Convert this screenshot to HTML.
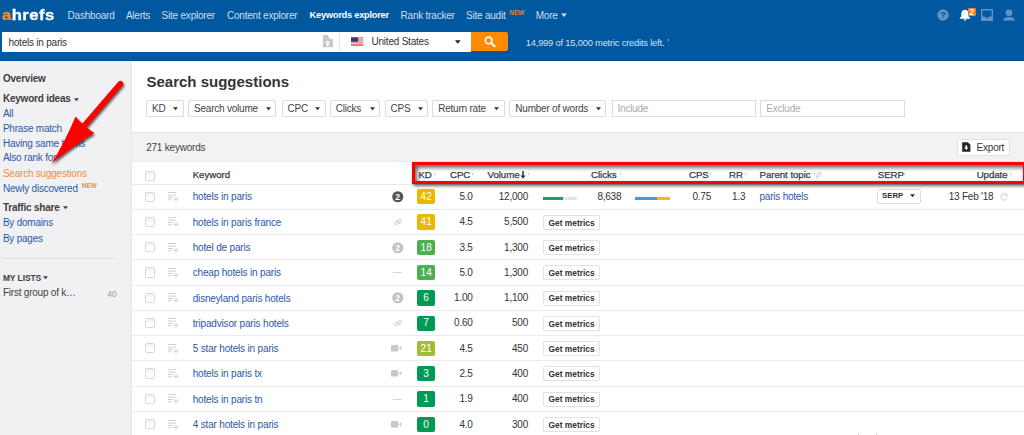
<!DOCTYPE html>
<html><head><meta charset="utf-8"><title>Keywords explorer</title>
<style>
html,body{margin:0;padding:0;width:1024px;height:435px;overflow:hidden;background:#fff;}
body{position:relative;font-family:"Liberation Sans",sans-serif;}
.b{position:absolute;}
.t{position:absolute;white-space:nowrap;}
svg.b{overflow:visible;}
</style></head><body>
<div class="b" style="left:0px;top:0px;width:1024px;height:61px;background:#00589f;"></div>
<div class="b" style="left:0px;top:60px;width:1024px;height:1px;background:#004e90;"></div>
<div class="t" style="left:2px;top:4.8px;font-size:14.8px;line-height:20px;font-weight:700;letter-spacing:0.35px;color:#fff;transform:scaleX(1.13);transform-origin:0 0;-webkit-text-stroke:0.35px #fff;"><span style="color:#f68b1f;-webkit-text-stroke:0.35px #f68b1f">a</span>hrefs</div>
<div class="t" style="left:67.6px;top:9.69px;font-size:10px;line-height:12.5px;color:#cfdff1;letter-spacing:-0.22px;">Dashboard</div>
<div class="t" style="left:125.9px;top:9.69px;font-size:10px;line-height:12.5px;color:#cfdff1;letter-spacing:-0.22px;">Alerts</div>
<div class="t" style="left:161.6px;top:9.69px;font-size:10px;line-height:12.5px;color:#cfdff1;letter-spacing:-0.22px;">Site explorer</div>
<div class="t" style="left:227px;top:9.69px;font-size:10px;line-height:12.5px;color:#cfdff1;letter-spacing:-0.22px;">Content explorer</div>
<div class="t" style="left:309.6px;top:10.37px;font-size:9.3px;line-height:11.62px;color:#fff;font-weight:700;letter-spacing:-0.26px;">Keywords explorer</div>
<div class="t" style="left:400.6px;top:9.69px;font-size:10px;line-height:12.5px;color:#cfdff1;letter-spacing:-0.22px;">Rank tracker</div>
<div class="t" style="left:466px;top:9.69px;font-size:10px;line-height:12.5px;color:#cfdff1;letter-spacing:-0.22px;">Site audit</div>
<div class="t" style="left:509.6px;top:9.18px;font-size:6.3px;line-height:7.88px;color:#f68b1f;-webkit-text-stroke:0.15px #f68b1f;">NEW</div>
<div class="t" style="left:535.7px;top:9.69px;font-size:10px;line-height:12.5px;color:#cfdff1;letter-spacing:-0.22px;">More</div>
<svg class="b" style="left:560px;top:12px" width="8" height="6"><path d="M1 1.5h6l-3 3.5z" fill="#cfdff1"/></svg>
<div class="b" style="left:2px;top:31.7px;width:337.3px;height:20px;background:#fff;"></div>
<div class="t" style="left:8.4px;top:36.69px;font-size:10px;line-height:12.5px;color:#333;letter-spacing:-0.22px;">hotels in paris</div>
<svg class="b" style="left:322.8px;top:35px" width="10" height="12.3" viewBox="0 0 10 12.3"><path d="M0 0h5.2v2.6h1.1v-1.2l0.5 0.6v2h3.2v8.3h-10z" fill="#c9c9c9"/><path d="M4.7 5.6l2.6 2.7h-1.6v3h-2v-3h-1.6z" fill="#fff"/></svg>
<div class="b" style="left:339px;top:31.7px;width:1px;height:20px;background:#e6e6e6;"></div>
<div class="b" style="left:340px;top:31.7px;width:131.4px;height:20px;background:#fff;"></div>
<svg class="b" style="left:351px;top:36.7px" width="12.3" height="9.2" viewBox="0 0 19 13"><rect width="19" height="13" fill="#fff"/><g fill="#d9534f"><rect y="0" width="19" height="1.6"/><rect y="3.2" width="19" height="1.6"/><rect y="6.4" width="19" height="1.6"/><rect y="9.6" width="19" height="1.6"/><rect y="11.6" width="19" height="1.4"/></g><rect width="11" height="6.8" fill="#2e3f80"/></svg>
<div class="t" style="left:371.5px;top:35.58px;font-size:10px;line-height:12.5px;color:#333;letter-spacing:-0.22px;">United States</div>
<svg class="b" style="left:455px;top:40px" width="6" height="4"><path d="M0 0.3h5.6l-2.8 3.4z" fill="#222"/></svg>
<div class="b" style="left:471.4px;top:31.6px;width:36.5px;height:19.8px;background:#ff8c00;border-radius:0 2px 2px 0;"></div>
<svg class="b" style="left:483.5px;top:36px" width="12" height="11" viewBox="0 0 12 11"><circle cx="4.6" cy="4.4" r="3.3" fill="none" stroke="#fff" stroke-width="1.6"/><path d="M7 6.8l3.6 3.4" stroke="#fff" stroke-width="2" stroke-linecap="round"/></svg>
<div class="t" style="left:525.75px;top:38.02px;font-size:9.3px;line-height:11.62px;color:#d3e2f2;letter-spacing:-0.18px;">14,999 of 15,000 metric credits left.</div>
<div class="b" style="left:667.5px;top:38.5px;width:0.8px;height:2px;background:#9fbddc;"></div>
<svg class="b" style="left:936.8px;top:9px" width="12" height="12" viewBox="0 0 12 12"><circle cx="6" cy="6" r="5.7" fill="#5f93c7"/><text x="6" y="9.4" text-anchor="middle" font-family="Liberation Sans" font-weight="700" font-size="9.6" fill="#0a569c">?</text></svg>
<svg class="b" style="left:958.6px;top:8.8px" width="12" height="12" viewBox="0 0 12 12"><path d="M6 0.8c-2.4 0-3.7 1.8-3.7 4v2.7l-1.6 1.6v0.6h10.6v-0.6l-1.6-1.6v-2.7c0-2.2-1.3-4-3.7-4z" fill="#fff"/><path d="M4.6 10.3h2.8c0 0.8-0.6 1.3-1.4 1.3s-1.4-0.5-1.4-1.3z" fill="#fff"/></svg>
<div class="b" style="left:968px;top:7.7px;width:7.7px;height:8.4px;background:#f47b20;border-radius:1px;"></div>
<div class="t" style="left:969.4px;top:6.94px;font-size:8.4px;line-height:10.5px;color:#fff;font-weight:700;">2</div>
<svg class="b" style="left:981px;top:9px" width="12" height="12" viewBox="0 0 12 12"><path d="M0 0h12v12h-12z M1.4 1.4v6.2h2.8l1 1.4h1.6l1-1.4h2.8v-6.2z" fill="#5f93c7" fill-rule="evenodd"/></svg>
<svg class="b" style="left:1003px;top:8.5px" width="12" height="12" viewBox="0 0 12 12"><circle cx="6" cy="3.8" r="3.3" fill="#5f93c7"/><path d="M0 11.5c0-2.3 2.5-3.6 6-3.6s6 1.3 6 3.6z" fill="#5f93c7"/></svg>
<div class="b" style="left:0px;top:61px;width:131px;height:374px;background:#f1f1f4;"></div>
<div class="b" style="left:131px;top:61px;width:1px;height:374px;background:#e3e3e8;"></div>
<div class="t" style="left:2.9px;top:73.48px;font-size:10px;line-height:12.5px;color:#3f3f3f;font-weight:700;letter-spacing:-0.22px;">Overview</div>
<div class="t" style="left:2.9px;top:92.78px;font-size:10px;line-height:12.5px;color:#3f3f3f;font-weight:700;letter-spacing:-0.22px;">Keyword ideas</div>
<svg class="b" style="left:73.5px;top:97.5px" width="6" height="4"><path d="M0 0.3h5l-2.5 3z" fill="#3f3f3f"/></svg>
<div class="t" style="left:2.9px;top:107.88px;font-size:10px;line-height:12.5px;color:#2b59a8;letter-spacing:-0.22px;">All</div>
<div class="t" style="left:2.9px;top:122.58px;font-size:10px;line-height:12.5px;color:#2b59a8;letter-spacing:-0.22px;">Phrase match</div>
<div class="t" style="left:2.9px;top:137.89px;font-size:10px;line-height:12.5px;color:#2b59a8;letter-spacing:-0.22px;">Having same terms</div>
<div class="t" style="left:2.9px;top:152.28px;font-size:10px;line-height:12.5px;color:#2b59a8;letter-spacing:-0.22px;">Also rank for</div>
<div class="t" style="left:2.9px;top:167.59px;font-size:10px;line-height:12.5px;color:#f68c3a;letter-spacing:-0.22px;">Search suggestions</div>
<div class="t" style="left:2.9px;top:182.78px;font-size:10px;line-height:12.5px;color:#2b59a8;letter-spacing:-0.22px;">Newly discovered</div>
<div class="t" style="left:81.8px;top:182.38px;font-size:6.4px;line-height:8.0px;color:#f98b3a;font-weight:700;">NEW</div>
<div class="t" style="left:2.9px;top:202.49px;font-size:10px;line-height:12.5px;color:#3f3f3f;font-weight:700;letter-spacing:-0.22px;">Traffic share</div>
<svg class="b" style="left:62.8px;top:206.3px" width="6" height="4"><path d="M0 0.3h5l-2.5 3z" fill="#3f3f3f"/></svg>
<div class="t" style="left:2.9px;top:217.49px;font-size:10px;line-height:12.5px;color:#2b59a8;letter-spacing:-0.22px;">By domains</div>
<div class="t" style="left:2.9px;top:232.59px;font-size:10px;line-height:12.5px;color:#2b59a8;letter-spacing:-0.22px;">By pages</div>
<div class="b" style="left:2.4px;top:258px;width:115px;height:1px;background:#dedee3;"></div>
<div class="t" style="left:2.9px;top:273.14px;font-size:8.5px;line-height:10.62px;color:#3f3f3f;font-weight:700;letter-spacing:-0.1px;">MY LISTS</div>
<svg class="b" style="left:43.4px;top:275.5px" width="6" height="4"><path d="M0 0.3h5l-2.5 3z" fill="#3f3f3f"/></svg>
<div class="t" style="left:2.9px;top:286.89px;font-size:10px;line-height:12.5px;color:#3f3f3f;letter-spacing:-0.22px;">First group of k&hellip;</div>
<div class="t" style="right:907.5px;top:289.03px;font-size:8.3px;line-height:10.38px;color:#999;">40</div>
<div class="b" style="left:132px;top:61px;width:892px;height:71px;background:#fff;"></div>
<div class="t" style="left:146.5px;top:73.23px;font-size:15px;line-height:18.75px;color:#333;font-weight:700;">Search suggestions</div>
<div class="b" style="left:291.5px;top:80.5px;width:1px;height:1.5px;background:#ccc;"></div>
<div class="b" style="left:146px;top:100.4px;width:37.69999999999999px;height:16.2px;background:#fff;border:1px solid #dcdcdc;border-radius:2px;box-sizing:border-box;"></div>
<div class="t" style="left:152px;top:102.88px;font-size:10px;line-height:12.5px;color:#444;letter-spacing:-0.22px;">KD</div>
<svg class="b" style="left:173.2px;top:107px" width="6" height="4"><path d="M0 0.3h5l-2.5 3z" fill="#333"/></svg>
<div class="b" style="left:188px;top:100.4px;width:88.39999999999998px;height:16.2px;background:#fff;border:1px solid #dcdcdc;border-radius:2px;box-sizing:border-box;"></div>
<div class="t" style="left:194px;top:102.88px;font-size:10px;line-height:12.5px;color:#444;letter-spacing:-0.22px;">Search volume</div>
<svg class="b" style="left:265.9px;top:107px" width="6" height="4"><path d="M0 0.3h5l-2.5 3z" fill="#333"/></svg>
<div class="b" style="left:281.5px;top:100.4px;width:44.0px;height:16.2px;background:#fff;border:1px solid #dcdcdc;border-radius:2px;box-sizing:border-box;"></div>
<div class="t" style="left:287.5px;top:102.88px;font-size:10px;line-height:12.5px;color:#444;letter-spacing:-0.22px;">CPC</div>
<svg class="b" style="left:315.0px;top:107px" width="6" height="4"><path d="M0 0.3h5l-2.5 3z" fill="#333"/></svg>
<div class="b" style="left:329.7px;top:100.4px;width:50.30000000000001px;height:16.2px;background:#fff;border:1px solid #dcdcdc;border-radius:2px;box-sizing:border-box;"></div>
<div class="t" style="left:335.7px;top:102.88px;font-size:10px;line-height:12.5px;color:#444;letter-spacing:-0.22px;">Clicks</div>
<svg class="b" style="left:369.5px;top:107px" width="6" height="4"><path d="M0 0.3h5l-2.5 3z" fill="#333"/></svg>
<div class="b" style="left:384.5px;top:100.4px;width:43.89999999999998px;height:16.2px;background:#fff;border:1px solid #dcdcdc;border-radius:2px;box-sizing:border-box;"></div>
<div class="t" style="left:390.5px;top:102.88px;font-size:10px;line-height:12.5px;color:#444;letter-spacing:-0.22px;">CPS</div>
<svg class="b" style="left:417.9px;top:107px" width="6" height="4"><path d="M0 0.3h5l-2.5 3z" fill="#333"/></svg>
<div class="b" style="left:432.2px;top:100.4px;width:72.40000000000003px;height:16.2px;background:#fff;border:1px solid #dcdcdc;border-radius:2px;box-sizing:border-box;"></div>
<div class="t" style="left:438.2px;top:102.88px;font-size:10px;line-height:12.5px;color:#444;letter-spacing:-0.22px;">Return rate</div>
<svg class="b" style="left:494.1px;top:107px" width="6" height="4"><path d="M0 0.3h5l-2.5 3z" fill="#333"/></svg>
<div class="b" style="left:509.3px;top:100.4px;width:97.19999999999999px;height:16.2px;background:#fff;border:1px solid #dcdcdc;border-radius:2px;box-sizing:border-box;"></div>
<div class="t" style="left:515.3px;top:102.88px;font-size:10px;line-height:12.5px;color:#444;letter-spacing:-0.22px;">Number of words</div>
<svg class="b" style="left:596.0px;top:107px" width="6" height="4"><path d="M0 0.3h5l-2.5 3z" fill="#333"/></svg>
<div class="b" style="left:611.5px;top:100.3px;width:144.5px;height:16.6px;background:#fff;border:1px solid #dcdcdc;box-sizing:border-box;"></div>
<div class="t" style="left:617.5px;top:102.88px;font-size:10px;line-height:12.5px;color:#aaa;letter-spacing:-0.22px;">Include</div>
<div class="b" style="left:760.2px;top:100.3px;width:144.8px;height:16.6px;background:#fff;border:1px solid #dcdcdc;box-sizing:border-box;"></div>
<div class="t" style="left:766.3px;top:102.88px;font-size:10px;line-height:12.5px;color:#aaa;letter-spacing:-0.22px;">Exclude</div>
<div class="b" style="left:132px;top:132px;width:892px;height:30px;background:#f2f2f5;border-top:1px solid #e6e6ea;border-bottom:1px solid #ebebee;box-sizing:border-box;"></div>
<div class="t" style="left:146.2px;top:141.89px;font-size:10px;line-height:12.5px;color:#444;letter-spacing:-0.22px;">271 keywords</div>
<div class="b" style="left:957px;top:138.8px;width:53.2px;height:17px;background:#fff;border:1px solid #e0e0e0;border-radius:2px;box-sizing:border-box;"></div>
<svg class="b" style="left:961.8px;top:142.2px" width="8.6" height="10" viewBox="0 0 8.6 10"><path d="M0.2 0.2h5.6l2.6 2.6v7h-8.2z" fill="#222"/><path d="M3.5 3.2h1.6v2.4h1.4l-2.2 2.4-2.2-2.4h1.4z" fill="#fff"/></svg>
<div class="t" style="left:976.6px;top:141.59px;font-size:10px;line-height:12.5px;color:#333;letter-spacing:-0.22px;">Export</div>
<div class="b" style="left:132px;top:162px;width:892px;height:273px;background:#fff;"></div>
<div class="b" style="left:132px;top:184px;width:892px;height:1px;background:#e8e8e8;"></div>
<div class="b" style="left:132px;top:208.8px;width:892px;height:1px;background:#ebebeb;"></div>
<div class="b" style="left:132px;top:234.0px;width:892px;height:1px;background:#ebebeb;"></div>
<div class="b" style="left:132px;top:259.2px;width:892px;height:1px;background:#ebebeb;"></div>
<div class="b" style="left:132px;top:284.5px;width:892px;height:1px;background:#ebebeb;"></div>
<div class="b" style="left:132px;top:309.8px;width:892px;height:1px;background:#ebebeb;"></div>
<div class="b" style="left:132px;top:335.1px;width:892px;height:1px;background:#ebebeb;"></div>
<div class="b" style="left:132px;top:360.4px;width:892px;height:1px;background:#ebebeb;"></div>
<div class="b" style="left:132px;top:385.7px;width:892px;height:1px;background:#ebebeb;"></div>
<div class="b" style="left:132px;top:411.0px;width:892px;height:1px;background:#ebebeb;"></div>
<div class="b" style="left:145.3px;top:170.8px;width:9.6px;height:10.2px;border:1px solid #d8d8d8;border-radius:1.5px;box-sizing:border-box;background:linear-gradient(#f0f0f0,#fff 60%);"></div>
<div class="t" style="left:192.7px;top:168.78px;font-size:9.7px;line-height:12.12px;color:#3a3a3a;letter-spacing:-0.05px;-webkit-text-stroke:0.25px #3a3a3a;">Keyword</div>
<div class="t" style="left:418.4px;top:168.78px;font-size:9.7px;line-height:12.12px;color:#3a3a3a;letter-spacing:-0.05px;-webkit-text-stroke:0.25px #3a3a3a;">KD</div>
<div class="t" style="left:450px;top:168.78px;font-size:9.7px;line-height:12.12px;color:#3a3a3a;letter-spacing:-0.05px;-webkit-text-stroke:0.25px #3a3a3a;">CPC</div>
<div class="t" style="left:487.5px;top:168.78px;font-size:9.7px;line-height:12.12px;color:#3a3a3a;letter-spacing:-0.05px;-webkit-text-stroke:0.25px #3a3a3a;">Volume</div>
<svg class="b" style="left:519.5px;top:171px" width="6" height="8"><path d="M2.2 0h1.6v4.6h1.9l-2.7 3.2-2.7-3.2h1.9z" fill="#3a3a3a"/></svg>
<div class="t" style="left:591px;top:168.78px;font-size:9.7px;line-height:12.12px;color:#3a3a3a;letter-spacing:-0.05px;-webkit-text-stroke:0.25px #3a3a3a;">Clicks</div>
<div class="t" style="left:689px;top:168.78px;font-size:9.7px;line-height:12.12px;color:#3a3a3a;letter-spacing:-0.05px;-webkit-text-stroke:0.25px #3a3a3a;">CPS</div>
<div class="t" style="left:729px;top:168.78px;font-size:9.7px;line-height:12.12px;color:#3a3a3a;letter-spacing:-0.05px;-webkit-text-stroke:0.25px #3a3a3a;">RR</div>
<div class="t" style="left:759.5px;top:168.78px;font-size:9.7px;line-height:12.12px;color:#3a3a3a;letter-spacing:-0.05px;-webkit-text-stroke:0.25px #3a3a3a;">Parent topic</div>
<div class="t" style="left:816.3px;top:169.53px;font-size:8px;line-height:10.0px;color:#bbb;letter-spacing:-0.22px;font-style:italic;">&beta;</div>
<div class="t" style="left:877.8px;top:168.78px;font-size:9.7px;line-height:12.12px;color:#3a3a3a;letter-spacing:-0.05px;-webkit-text-stroke:0.25px #3a3a3a;">SERP</div>
<div class="t" style="right:16.399999999999977px;top:168.78px;font-size:9.7px;line-height:12.12px;color:#3a3a3a;letter-spacing:-0.05px;-webkit-text-stroke:0.25px #3a3a3a;">Update</div>
<div class="b" style="left:434px;top:172.5px;width:0.8px;height:2px;background:#c8c8c8;"></div>
<div class="b" style="left:471.5px;top:172.5px;width:0.8px;height:2px;background:#c8c8c8;"></div>
<div class="b" style="left:527.5px;top:172.5px;width:0.8px;height:2px;background:#c8c8c8;"></div>
<div class="b" style="left:620px;top:172.5px;width:0.8px;height:2px;background:#c8c8c8;"></div>
<div class="b" style="left:710px;top:172.5px;width:0.8px;height:2px;background:#c8c8c8;"></div>
<div class="b" style="left:744.5px;top:172.5px;width:0.8px;height:2px;background:#c8c8c8;"></div>
<div class="b" style="left:813.5px;top:172.5px;width:0.8px;height:2px;background:#c8c8c8;"></div>
<div class="b" style="left:904px;top:172.5px;width:0.8px;height:2px;background:#c8c8c8;"></div>
<div class="b" style="left:1010.4px;top:172.5px;width:0.8px;height:2px;background:#c8c8c8;"></div>
<div class="b" style="left:145.3px;top:191.5px;width:9.6px;height:10.2px;border:1px solid #d8d8d8;border-radius:1.5px;box-sizing:border-box;background:linear-gradient(#f0f0f0,#fff 60%);"></div>
<svg class="b" style="left:167.8px;top:192.00px" width="10.5" height="9.5" viewBox="0 0 10.5 9.5"><g fill="#cfcfcf"><rect x="0" y="0" width="8" height="1"/><rect x="0" y="2.6" width="8" height="1"/><rect x="0" y="5" width="5" height="1"/><rect x="0" y="7.2" width="3.5" height="1"/><rect x="5.5" y="6.8" width="5" height="1"/><rect x="7.5" y="4.8" width="1" height="5"/></g></svg>
<div class="t" style="left:192.7px;top:191.38px;font-size:10px;line-height:12.5px;color:#2b59a8;letter-spacing:-0.17px;">hotels in paris</div>
<svg class="b" style="left:391.7px;top:191.20px" width="11.5" height="11.5" viewBox="0 0 12 12"><circle cx="6" cy="6" r="5.8" fill="#555"/><text x="6" y="9.4" text-anchor="middle" font-family="Liberation Sans" font-weight="700" font-size="9" fill="#fff">2</text></svg>
<div class="b" style="left:416.9px;top:189.2px;width:18.5px;height:15.3px;background:#ebb700;border-radius:2px;"></div>
<div class="t" style="left:426.15px;top:191.08px;font-size:10px;line-height:12.5px;color:#fff;transform:translateX(-50%);">42</div>
<div class="t" style="right:551.3px;top:190.98px;font-size:10px;line-height:12.5px;color:#333;letter-spacing:-0.22px;">5.0</div>
<div class="t" style="right:496px;top:190.98px;font-size:10px;line-height:12.5px;color:#333;letter-spacing:-0.22px;">12,000</div>
<div class="b" style="left:542.5px;top:196.8px;width:20.5px;height:3px;background:#13a463;"></div>
<div class="b" style="left:563px;top:196.8px;width:14px;height:3px;background:#e4e4e4;"></div>
<div class="t" style="right:402.70000000000005px;top:190.98px;font-size:10px;line-height:12.5px;color:#333;letter-spacing:-0.22px;">8,638</div>
<div class="b" style="left:635.2px;top:196.8px;width:22.2px;height:3px;background:#3c9ce6;"></div>
<div class="b" style="left:657.4px;top:196.8px;width:12.4px;height:3px;background:#fbb911;"></div>
<div class="t" style="right:313px;top:190.98px;font-size:10px;line-height:12.5px;color:#333;letter-spacing:-0.22px;">0.75</div>
<div class="t" style="right:278.70000000000005px;top:190.98px;font-size:10px;line-height:12.5px;color:#333;letter-spacing:-0.22px;">1.3</div>
<div class="t" style="left:759.5px;top:190.98px;font-size:10px;line-height:12.5px;color:#2b59a8;letter-spacing:-0.22px;">paris hotels</div>
<div class="b" style="left:877.2px;top:189.2px;width:44.3px;height:14.8px;background:#fff;border:1px solid #dcdcdc;border-radius:2px;box-sizing:border-box;"></div>
<div class="t" style="left:882px;top:191.32px;font-size:7.8px;line-height:9.75px;color:#333;font-weight:700;">SERP</div>
<svg class="b" style="left:910.2px;top:194.40px" width="6" height="4"><path d="M0 0.3h5l-2.5 3z" fill="#333"/></svg>
<div class="t" style="right:30.600000000000023px;top:190.98px;font-size:10px;line-height:12.5px;color:#333;letter-spacing:-0.22px;">13 Feb '18</div>
<svg class="b" style="left:999.5px;top:192.80px" width="8" height="8" viewBox="0 0 8 8"><path d="M6.6 2.4A3.1 3.1 0 1 0 7 4.6" fill="none" stroke="#c8c8c8" stroke-width="0.9"/><path d="M7.4 0.6v2.6h-2.6z" fill="#c8c8c8"/></svg>
<div class="b" style="left:145.3px;top:216.78px;width:9.6px;height:10.2px;border:1px solid #d8d8d8;border-radius:1.5px;box-sizing:border-box;background:linear-gradient(#f0f0f0,#fff 60%);"></div>
<svg class="b" style="left:167.8px;top:217.28px" width="10.5" height="9.5" viewBox="0 0 10.5 9.5"><g fill="#cfcfcf"><rect x="0" y="0" width="8" height="1"/><rect x="0" y="2.6" width="8" height="1"/><rect x="0" y="5" width="5" height="1"/><rect x="0" y="7.2" width="3.5" height="1"/><rect x="5.5" y="6.8" width="5" height="1"/><rect x="7.5" y="4.8" width="1" height="5"/></g></svg>
<div class="t" style="left:192.7px;top:216.66px;font-size:10px;line-height:12.5px;color:#2b59a8;letter-spacing:-0.17px;">hotels in paris france</div>
<svg class="b" style="left:393.5px;top:218.08px" width="8.5" height="8" viewBox="0 0 8.5 8"><g fill="none" stroke="#cfcfcf" stroke-width="1"><rect x="0.8" y="3.4" width="4" height="2.6" rx="1.3" transform="rotate(-40 2.8 4.7)"/><rect x="3.7" y="2" width="4" height="2.6" rx="1.3" transform="rotate(-40 5.7 3.3)"/></g></svg>
<div class="b" style="left:416.9px;top:214.48px;width:18.5px;height:15.3px;background:#ebb700;border-radius:2px;"></div>
<div class="t" style="left:426.15px;top:216.36px;font-size:10px;line-height:12.5px;color:#fff;transform:translateX(-50%);">41</div>
<div class="t" style="right:551.3px;top:216.26px;font-size:10px;line-height:12.5px;color:#333;letter-spacing:-0.22px;">4.5</div>
<div class="t" style="right:496px;top:216.26px;font-size:10px;line-height:12.5px;color:#333;letter-spacing:-0.22px;">5,500</div>
<div class="b" style="left:543px;top:214.67999999999998px;width:57px;height:15.1px;background:#fff;border:1px solid #e2e2e2;border-radius:2px;box-sizing:border-box;"></div>
<div class="t" style="left:548.5px;top:217.52px;font-size:8.4px;line-height:10.5px;color:#333;font-weight:700;">Get metrics</div>
<div class="b" style="left:145.3px;top:242.06px;width:9.6px;height:10.2px;border:1px solid #d8d8d8;border-radius:1.5px;box-sizing:border-box;background:linear-gradient(#f0f0f0,#fff 60%);"></div>
<svg class="b" style="left:167.8px;top:242.56px" width="10.5" height="9.5" viewBox="0 0 10.5 9.5"><g fill="#cfcfcf"><rect x="0" y="0" width="8" height="1"/><rect x="0" y="2.6" width="8" height="1"/><rect x="0" y="5" width="5" height="1"/><rect x="0" y="7.2" width="3.5" height="1"/><rect x="5.5" y="6.8" width="5" height="1"/><rect x="7.5" y="4.8" width="1" height="5"/></g></svg>
<div class="t" style="left:192.7px;top:241.94px;font-size:10px;line-height:12.5px;color:#2b59a8;letter-spacing:-0.17px;">hotel de paris</div>
<svg class="b" style="left:391.7px;top:241.76px" width="11.5" height="11.5" viewBox="0 0 12 12"><circle cx="6" cy="6" r="5.8" fill="#c2c2c2"/><text x="6" y="9.4" text-anchor="middle" font-family="Liberation Sans" font-weight="700" font-size="9" fill="#fff">2</text></svg>
<div class="b" style="left:416.9px;top:239.76px;width:18.5px;height:15.3px;background:#4fae4f;border-radius:2px;"></div>
<div class="t" style="left:426.15px;top:241.64px;font-size:10px;line-height:12.5px;color:#fff;transform:translateX(-50%);">18</div>
<div class="t" style="right:551.3px;top:241.54px;font-size:10px;line-height:12.5px;color:#333;letter-spacing:-0.22px;">3.5</div>
<div class="t" style="right:496px;top:241.54px;font-size:10px;line-height:12.5px;color:#333;letter-spacing:-0.22px;">1,300</div>
<div class="b" style="left:543px;top:239.95999999999998px;width:57px;height:15.1px;background:#fff;border:1px solid #e2e2e2;border-radius:2px;box-sizing:border-box;"></div>
<div class="t" style="left:548.5px;top:242.80px;font-size:8.4px;line-height:10.5px;color:#333;font-weight:700;">Get metrics</div>
<div class="b" style="left:145.3px;top:267.34px;width:9.6px;height:10.2px;border:1px solid #d8d8d8;border-radius:1.5px;box-sizing:border-box;background:linear-gradient(#f0f0f0,#fff 60%);"></div>
<svg class="b" style="left:167.8px;top:267.84px" width="10.5" height="9.5" viewBox="0 0 10.5 9.5"><g fill="#cfcfcf"><rect x="0" y="0" width="8" height="1"/><rect x="0" y="2.6" width="8" height="1"/><rect x="0" y="5" width="5" height="1"/><rect x="0" y="7.2" width="3.5" height="1"/><rect x="5.5" y="6.8" width="5" height="1"/><rect x="7.5" y="4.8" width="1" height="5"/></g></svg>
<div class="t" style="left:192.7px;top:267.22px;font-size:10px;line-height:12.5px;color:#2b59a8;letter-spacing:-0.17px;">cheap hotels in paris</div>
<div class="b" style="left:393px;top:272.23999999999995px;width:8.5px;height:1px;background:#d5d5d5;"></div>
<div class="b" style="left:416.9px;top:265.03999999999996px;width:18.5px;height:15.3px;background:#4fae4f;border-radius:2px;"></div>
<div class="t" style="left:426.15px;top:266.93px;font-size:10px;line-height:12.5px;color:#fff;transform:translateX(-50%);">14</div>
<div class="t" style="right:551.3px;top:266.82px;font-size:10px;line-height:12.5px;color:#333;letter-spacing:-0.22px;">5.0</div>
<div class="t" style="right:496px;top:266.82px;font-size:10px;line-height:12.5px;color:#333;letter-spacing:-0.22px;">1,300</div>
<div class="b" style="left:543px;top:265.23999999999995px;width:57px;height:15.1px;background:#fff;border:1px solid #e2e2e2;border-radius:2px;box-sizing:border-box;"></div>
<div class="t" style="left:548.5px;top:268.08px;font-size:8.4px;line-height:10.5px;color:#333;font-weight:700;">Get metrics</div>
<div class="b" style="left:145.3px;top:292.62px;width:9.6px;height:10.2px;border:1px solid #d8d8d8;border-radius:1.5px;box-sizing:border-box;background:linear-gradient(#f0f0f0,#fff 60%);"></div>
<svg class="b" style="left:167.8px;top:293.12px" width="10.5" height="9.5" viewBox="0 0 10.5 9.5"><g fill="#cfcfcf"><rect x="0" y="0" width="8" height="1"/><rect x="0" y="2.6" width="8" height="1"/><rect x="0" y="5" width="5" height="1"/><rect x="0" y="7.2" width="3.5" height="1"/><rect x="5.5" y="6.8" width="5" height="1"/><rect x="7.5" y="4.8" width="1" height="5"/></g></svg>
<div class="t" style="left:192.7px;top:292.50px;font-size:10px;line-height:12.5px;color:#2b59a8;letter-spacing:-0.17px;">disneyland paris hotels</div>
<svg class="b" style="left:391.7px;top:292.32px" width="11.5" height="11.5" viewBox="0 0 12 12"><circle cx="6" cy="6" r="5.8" fill="#c2c2c2"/><text x="6" y="9.4" text-anchor="middle" font-family="Liberation Sans" font-weight="700" font-size="9" fill="#fff">2</text></svg>
<div class="b" style="left:416.9px;top:290.32px;width:18.5px;height:15.3px;background:#009a55;border-radius:2px;"></div>
<div class="t" style="left:426.15px;top:292.21px;font-size:10px;line-height:12.5px;color:#fff;transform:translateX(-50%);">6</div>
<div class="t" style="right:551.3px;top:292.11px;font-size:10px;line-height:12.5px;color:#333;letter-spacing:-0.22px;">1.00</div>
<div class="t" style="right:496px;top:292.11px;font-size:10px;line-height:12.5px;color:#333;letter-spacing:-0.22px;">1,100</div>
<div class="b" style="left:543px;top:290.52px;width:57px;height:15.1px;background:#fff;border:1px solid #e2e2e2;border-radius:2px;box-sizing:border-box;"></div>
<div class="t" style="left:548.5px;top:293.36px;font-size:8.4px;line-height:10.5px;color:#333;font-weight:700;">Get metrics</div>
<div class="b" style="left:145.3px;top:317.90000000000003px;width:9.6px;height:10.2px;border:1px solid #d8d8d8;border-radius:1.5px;box-sizing:border-box;background:linear-gradient(#f0f0f0,#fff 60%);"></div>
<svg class="b" style="left:167.8px;top:318.40px" width="10.5" height="9.5" viewBox="0 0 10.5 9.5"><g fill="#cfcfcf"><rect x="0" y="0" width="8" height="1"/><rect x="0" y="2.6" width="8" height="1"/><rect x="0" y="5" width="5" height="1"/><rect x="0" y="7.2" width="3.5" height="1"/><rect x="5.5" y="6.8" width="5" height="1"/><rect x="7.5" y="4.8" width="1" height="5"/></g></svg>
<div class="t" style="left:192.7px;top:317.79px;font-size:10px;line-height:12.5px;color:#2b59a8;letter-spacing:-0.17px;">tripadvisor paris hotels</div>
<svg class="b" style="left:393.5px;top:319.20px" width="8.5" height="8" viewBox="0 0 8.5 8"><g fill="none" stroke="#cfcfcf" stroke-width="1"><rect x="0.8" y="3.4" width="4" height="2.6" rx="1.3" transform="rotate(-40 2.8 4.7)"/><rect x="3.7" y="2" width="4" height="2.6" rx="1.3" transform="rotate(-40 5.7 3.3)"/></g></svg>
<div class="b" style="left:416.9px;top:315.6px;width:18.5px;height:15.3px;background:#009a55;border-radius:2px;"></div>
<div class="t" style="left:426.15px;top:317.49px;font-size:10px;line-height:12.5px;color:#fff;transform:translateX(-50%);">7</div>
<div class="t" style="right:551.3px;top:317.39px;font-size:10px;line-height:12.5px;color:#333;letter-spacing:-0.22px;">0.60</div>
<div class="t" style="right:496px;top:317.39px;font-size:10px;line-height:12.5px;color:#333;letter-spacing:-0.22px;">500</div>
<div class="b" style="left:543px;top:315.8px;width:57px;height:15.1px;background:#fff;border:1px solid #e2e2e2;border-radius:2px;box-sizing:border-box;"></div>
<div class="t" style="left:548.5px;top:318.64px;font-size:8.4px;line-height:10.5px;color:#333;font-weight:700;">Get metrics</div>
<div class="b" style="left:145.3px;top:343.18px;width:9.6px;height:10.2px;border:1px solid #d8d8d8;border-radius:1.5px;box-sizing:border-box;background:linear-gradient(#f0f0f0,#fff 60%);"></div>
<svg class="b" style="left:167.8px;top:343.68px" width="10.5" height="9.5" viewBox="0 0 10.5 9.5"><g fill="#cfcfcf"><rect x="0" y="0" width="8" height="1"/><rect x="0" y="2.6" width="8" height="1"/><rect x="0" y="5" width="5" height="1"/><rect x="0" y="7.2" width="3.5" height="1"/><rect x="5.5" y="6.8" width="5" height="1"/><rect x="7.5" y="4.8" width="1" height="5"/></g></svg>
<div class="t" style="left:192.7px;top:343.06px;font-size:10px;line-height:12.5px;color:#2b59a8;letter-spacing:-0.17px;">5 star hotels in paris</div>
<svg class="b" style="left:391.4px;top:344.78px" width="10.5" height="7" viewBox="0 0 10.5 7"><rect x="0" y="0" width="7.2" height="6.6" rx="1.2" fill="#c8c8c8"/><path d="M7.6 3.3L10.4 1v4.6z" fill="#c8c8c8"/></svg>
<div class="b" style="left:416.9px;top:340.88px;width:18.5px;height:15.3px;background:#a2bd30;border-radius:2px;"></div>
<div class="t" style="left:426.15px;top:342.77px;font-size:10px;line-height:12.5px;color:#fff;transform:translateX(-50%);">21</div>
<div class="t" style="right:551.3px;top:342.67px;font-size:10px;line-height:12.5px;color:#333;letter-spacing:-0.22px;">4.5</div>
<div class="t" style="right:496px;top:342.67px;font-size:10px;line-height:12.5px;color:#333;letter-spacing:-0.22px;">450</div>
<div class="b" style="left:543px;top:341.08px;width:57px;height:15.1px;background:#fff;border:1px solid #e2e2e2;border-radius:2px;box-sizing:border-box;"></div>
<div class="t" style="left:548.5px;top:343.92px;font-size:8.4px;line-height:10.5px;color:#333;font-weight:700;">Get metrics</div>
<div class="b" style="left:145.3px;top:368.46px;width:9.6px;height:10.2px;border:1px solid #d8d8d8;border-radius:1.5px;box-sizing:border-box;background:linear-gradient(#f0f0f0,#fff 60%);"></div>
<svg class="b" style="left:167.8px;top:368.96px" width="10.5" height="9.5" viewBox="0 0 10.5 9.5"><g fill="#cfcfcf"><rect x="0" y="0" width="8" height="1"/><rect x="0" y="2.6" width="8" height="1"/><rect x="0" y="5" width="5" height="1"/><rect x="0" y="7.2" width="3.5" height="1"/><rect x="5.5" y="6.8" width="5" height="1"/><rect x="7.5" y="4.8" width="1" height="5"/></g></svg>
<div class="t" style="left:192.7px;top:368.34px;font-size:10px;line-height:12.5px;color:#2b59a8;letter-spacing:-0.17px;">hotels in paris tx</div>
<svg class="b" style="left:391.4px;top:370.06px" width="10.5" height="7" viewBox="0 0 10.5 7"><rect x="0" y="0" width="7.2" height="6.6" rx="1.2" fill="#c8c8c8"/><path d="M7.6 3.3L10.4 1v4.6z" fill="#c8c8c8"/></svg>
<div class="b" style="left:416.9px;top:366.15999999999997px;width:18.5px;height:15.3px;background:#009a55;border-radius:2px;"></div>
<div class="t" style="left:426.15px;top:368.05px;font-size:10px;line-height:12.5px;color:#fff;transform:translateX(-50%);">3</div>
<div class="t" style="right:551.3px;top:367.94px;font-size:10px;line-height:12.5px;color:#333;letter-spacing:-0.22px;">2.5</div>
<div class="t" style="right:496px;top:367.94px;font-size:10px;line-height:12.5px;color:#333;letter-spacing:-0.22px;">400</div>
<div class="b" style="left:543px;top:366.35999999999996px;width:57px;height:15.1px;background:#fff;border:1px solid #e2e2e2;border-radius:2px;box-sizing:border-box;"></div>
<div class="t" style="left:548.5px;top:369.20px;font-size:8.4px;line-height:10.5px;color:#333;font-weight:700;">Get metrics</div>
<div class="b" style="left:145.3px;top:393.74px;width:9.6px;height:10.2px;border:1px solid #d8d8d8;border-radius:1.5px;box-sizing:border-box;background:linear-gradient(#f0f0f0,#fff 60%);"></div>
<svg class="b" style="left:167.8px;top:394.24px" width="10.5" height="9.5" viewBox="0 0 10.5 9.5"><g fill="#cfcfcf"><rect x="0" y="0" width="8" height="1"/><rect x="0" y="2.6" width="8" height="1"/><rect x="0" y="5" width="5" height="1"/><rect x="0" y="7.2" width="3.5" height="1"/><rect x="5.5" y="6.8" width="5" height="1"/><rect x="7.5" y="4.8" width="1" height="5"/></g></svg>
<div class="t" style="left:192.7px;top:393.62px;font-size:10px;line-height:12.5px;color:#2b59a8;letter-spacing:-0.17px;">hotels in paris tn</div>
<div class="b" style="left:393px;top:398.64px;width:8.5px;height:1px;background:#d5d5d5;"></div>
<div class="b" style="left:416.9px;top:391.44px;width:18.5px;height:15.3px;background:#009a55;border-radius:2px;"></div>
<div class="t" style="left:426.15px;top:393.33px;font-size:10px;line-height:12.5px;color:#fff;transform:translateX(-50%);">1</div>
<div class="t" style="right:551.3px;top:393.23px;font-size:10px;line-height:12.5px;color:#333;letter-spacing:-0.22px;">1.9</div>
<div class="t" style="right:496px;top:393.23px;font-size:10px;line-height:12.5px;color:#333;letter-spacing:-0.22px;">400</div>
<div class="b" style="left:543px;top:391.64px;width:57px;height:15.1px;background:#fff;border:1px solid #e2e2e2;border-radius:2px;box-sizing:border-box;"></div>
<div class="t" style="left:548.5px;top:394.48px;font-size:8.4px;line-height:10.5px;color:#333;font-weight:700;">Get metrics</div>
<div class="b" style="left:145.3px;top:419.02000000000004px;width:9.6px;height:10.2px;border:1px solid #d8d8d8;border-radius:1.5px;box-sizing:border-box;background:linear-gradient(#f0f0f0,#fff 60%);"></div>
<svg class="b" style="left:167.8px;top:419.52px" width="10.5" height="9.5" viewBox="0 0 10.5 9.5"><g fill="#cfcfcf"><rect x="0" y="0" width="8" height="1"/><rect x="0" y="2.6" width="8" height="1"/><rect x="0" y="5" width="5" height="1"/><rect x="0" y="7.2" width="3.5" height="1"/><rect x="5.5" y="6.8" width="5" height="1"/><rect x="7.5" y="4.8" width="1" height="5"/></g></svg>
<div class="t" style="left:192.7px;top:418.91px;font-size:10px;line-height:12.5px;color:#2b59a8;letter-spacing:-0.17px;">4 star hotels in paris</div>
<svg class="b" style="left:391.4px;top:420.62px" width="10.5" height="7" viewBox="0 0 10.5 7"><rect x="0" y="0" width="7.2" height="6.6" rx="1.2" fill="#c8c8c8"/><path d="M7.6 3.3L10.4 1v4.6z" fill="#c8c8c8"/></svg>
<div class="b" style="left:416.9px;top:416.72px;width:18.5px;height:15.3px;background:#009a55;border-radius:2px;"></div>
<div class="t" style="left:426.15px;top:418.61px;font-size:10px;line-height:12.5px;color:#fff;transform:translateX(-50%);">0</div>
<div class="t" style="right:551.3px;top:418.51px;font-size:10px;line-height:12.5px;color:#333;letter-spacing:-0.22px;">4.0</div>
<div class="t" style="right:496px;top:418.51px;font-size:10px;line-height:12.5px;color:#333;letter-spacing:-0.22px;">300</div>
<div class="b" style="left:543px;top:416.92px;width:57px;height:15.1px;background:#fff;border:1px solid #e2e2e2;border-radius:2px;box-sizing:border-box;"></div>
<div class="t" style="left:548.5px;top:419.76px;font-size:8.4px;line-height:10.5px;color:#333;font-weight:700;">Get metrics</div>
<div class="b" style="left:857.5px;top:433.5px;width:1.2px;height:1.5px;background:#bbb;"></div>
<div class="b" style="left:875.5px;top:433.5px;width:1.2px;height:1.5px;background:#bbb;"></div>
<div class="b" style="left:411.8px;top:162.2px;width:614px;height:22.3px;border:3px solid #f00;box-sizing:border-box;box-shadow:0.5px 2px 3px rgba(0,0,0,0.6), inset 2px 2.5px 4px rgba(0,0,0,0.65);"></div>
<svg class="b" style="left:0;top:60px;filter:drop-shadow(1.2px 2px 1.3px rgba(0,0,0,0.6))" width="140" height="120" viewBox="0 60 140 120"><path d="M120.4 83.7 L80 130.5" stroke="#f00" stroke-width="5.6" stroke-linecap="round"/><path d="M51.6 163.5 Q65.1 141.3 75.6 116.5 Q83.6 126.2 94.2 132.9 Q71.4 146.9 51.6 163.5 Z" fill="#f00"/></svg>
</body></html>
